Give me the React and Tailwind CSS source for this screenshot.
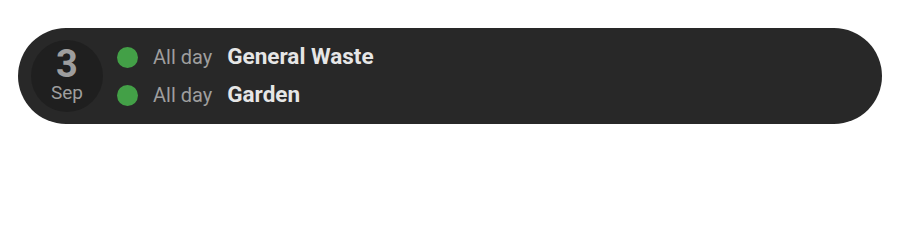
const events = [
  { time: "All day", title: "General Waste", color: "bg-[#43a047]" },
  { time: "All day", title: "Garden", color: "bg-[#43a047]" },
];

const App = () => {
  return (
    <section className="min-h-[240px] bg-white px-[18px] pt-[28px] font-['Roboto',sans-serif]">
      <div className="flex h-[96px] items-center gap-[14px] rounded-full bg-[#282828] pl-[13px]">
        <div className="flex size-[72px] shrink-0 flex-col items-center justify-center rounded-full bg-[#1f1f1f] text-[#9e9e9e]">
          <span className="-mt-[2px] text-[38px] font-bold leading-[34px]">3</span>
          <span className="mt-[1px] text-[19px] leading-[22px]">Sep</span>
        </div>
        <div className="flex flex-col gap-[14px]">
          {events.map((ev) => (
            <div key={ev.title} className="flex h-[24px] items-center">
              <span className={`size-[21px] rounded-full ${ev.color}`} />
              <span className="ml-[15px] text-[20px] text-[#9e9e9e]">
                {ev.time}
              </span>
              <span className="ml-[15px] text-[22.5px] font-bold text-[#e6e6e6]">
                {ev.title}
              </span>
            </div>
          ))}
        </div>
      </div>
    </section>
  );
};

export default App;
